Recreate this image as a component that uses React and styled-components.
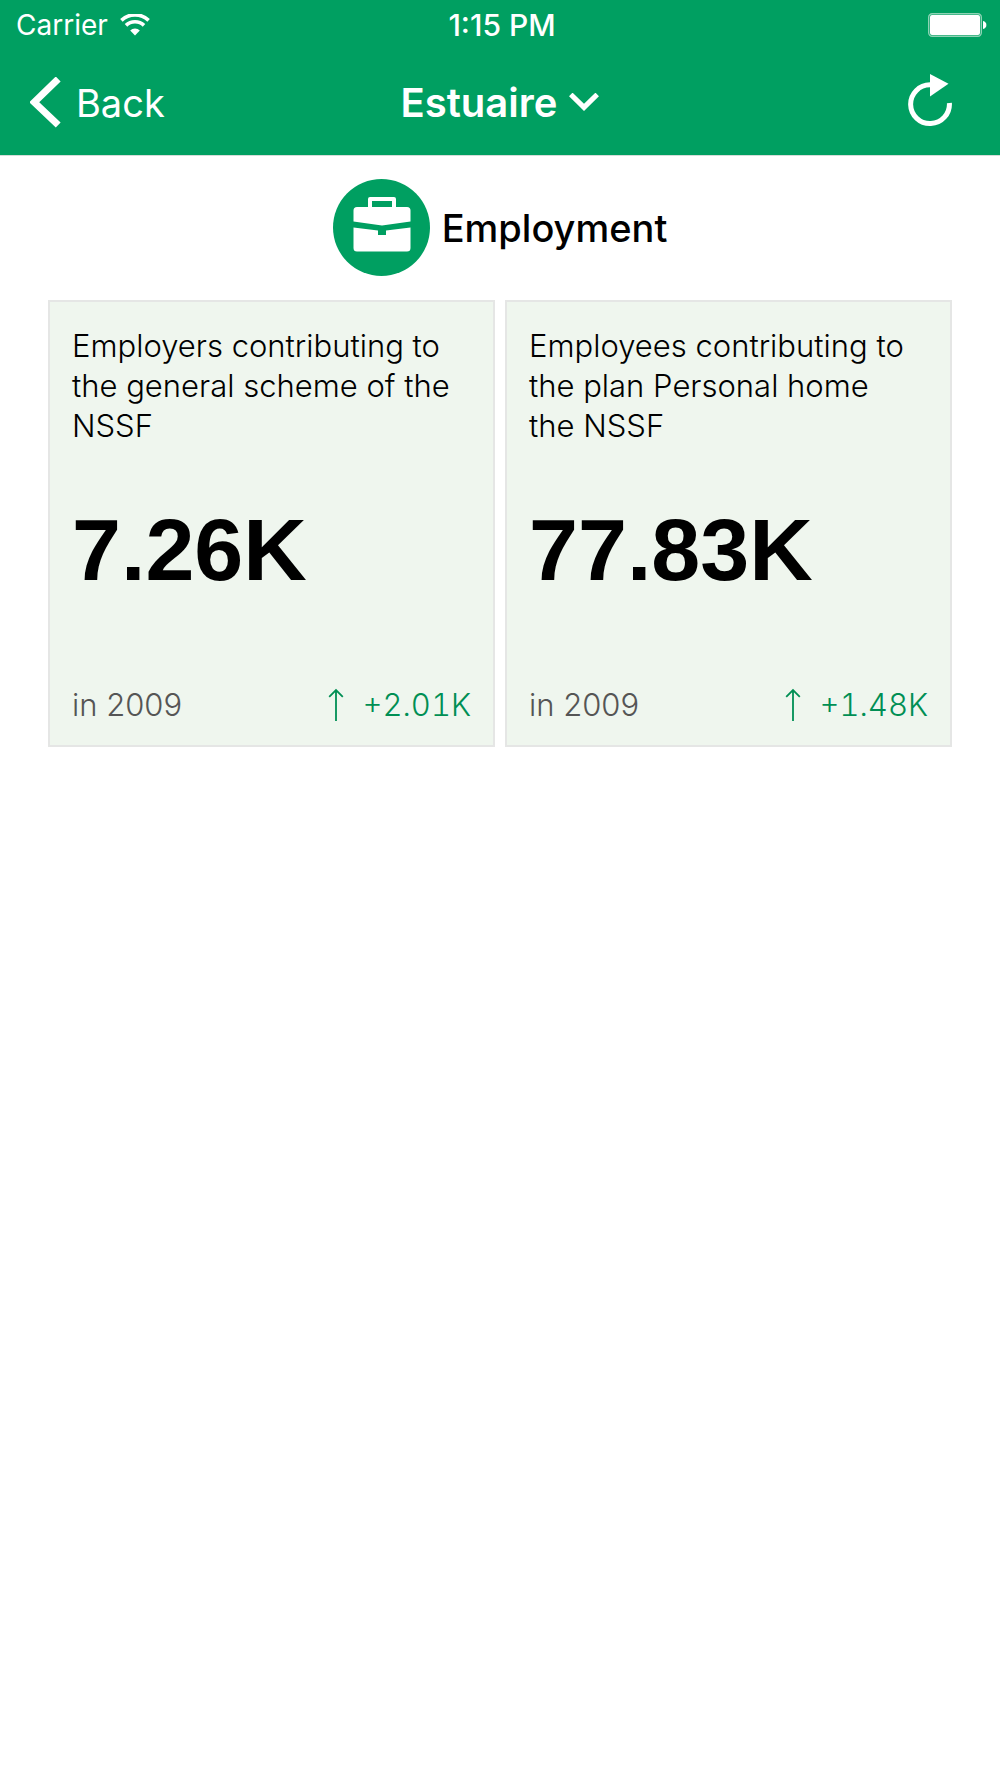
import React from "react";
import styled, { createGlobalStyle } from "styled-components";

const green = "#009f61";

const GlobalStyle = createGlobalStyle`
  * { box-sizing: border-box; }
  body {
    margin: 0;
    background: #fff;
    color: #000;
    font-family: Inter, "Liberation Sans", sans-serif;
  }
  svg { display: block; flex: none; }
`;

const Header = styled.header`
  background: ${green};
  color: #fff;
  border-bottom: 1px solid #d4ddd9;
`;

const StatusBar = styled.div`
  display: grid;
  grid-template-columns: 1fr auto 1fr;
  align-items: center;
  height: 50px;
  padding: 0 12px 0 16px;
  font-size: 28px;
  line-height: 32px;
`;

const Carrier = styled.div`
  display: flex;
  align-items: center;
  gap: 12px;
`;

const Time = styled.time`
  font-size: 30px;
  font-weight: 500;
`;

const End = styled.div`
  display: flex;
  justify-content: flex-end;
`;

const NavBar = styled.nav`
  display: grid;
  grid-template-columns: 1fr auto 1fr;
  align-items: center;
  height: 105px;
  padding: 0 30px;
`;

const NavButton = styled.button`
  display: flex;
  align-items: center;
  justify-self: start;
  gap: 14px;
  padding: 0;
  border: 0;
  background: none;
  color: inherit;
  font: 400 38px/48px Inter, "Liberation Sans", sans-serif;
  cursor: pointer;
`;

const TitleButton = styled(NavButton)`
  justify-self: center;
  gap: 12px;
  font-size: 40px;
  font-weight: 600;
`;

const IconButton = styled(NavButton)`
  justify-self: end;
  padding: 0 18px;
`;

const SectionTitle = styled.div`
  display: flex;
  align-items: center;
  justify-content: center;
  gap: 12px;
  padding: 23px 24px 24px;
`;

const Heading = styled.h1`
  margin: 0;
  font-size: 38px;
  line-height: 48px;
  font-weight: 500;
`;

const CardGrid = styled.section`
  display: grid;
  grid-template-columns: 1fr 1fr;
  gap: 10px;
  padding: 0 48px;
`;

const Card = styled.article`
  display: flex;
  flex-direction: column;
  aspect-ratio: 1;
  padding: 24px 22px 20px;
  border: 2px solid #e5e6e5;
  background: #eff6ee;
  font-size: 31px;
  line-height: 40px;
  font-weight: 300;
`;

const Label = styled.h2`
  margin: 0;
  padding-right: 12px;
  font: inherit;
`;

const Value = styled.p`
  margin: 56px 0 0;
  font: 700 88px/96px "Liberation Sans", Arial, sans-serif;
`;

const CardFooter = styled.footer`
  display: flex;
  justify-content: space-between;
  margin-top: auto;
`;

const Period = styled.span`
  color: #555;
`;

const Change = styled.span`
  display: flex;
  align-items: center;
  gap: 18px;
  color: #008f54;
  font-variant-numeric: tabular-nums;
`;

const WifiIcon = () => (
  <svg width="30" height="22" viewBox="0 0 30 22" aria-hidden="true">
    <g fill="none" stroke="#fff" strokeWidth="3.6">
      <path d="M1.4 6.4A19.4 19.4 0 0 1 28.6 6.4" />
      <path d="M6 11.4A12.8 12.8 0 0 1 24 11.4" />
    </g>
    <path d="M15 21.5L10.2 16.4A6.8 6.8 0 0 1 19.8 16.4Z" fill="#fff" />
  </svg>
);

const BatteryIcon = () => (
  <svg width="60" height="24" viewBox="0 0 60 24" role="img" aria-label="Battery full">
    <rect x="0.7" y="0.7" width="52.600" height="22.600" rx="3.5" fill="none" stroke="#8ed3b5" strokeWidth="1.4" />
    <rect x="2" y="2" width="50" height="20" rx="2" fill="#fff" />
    <path d="M55 8C59.500 8.500 59.500 15.500 55 16Z" fill="#fff" />
  </svg>
);

const BackIcon = () => (
  <svg width="32" height="52" viewBox="0 0 32 52" aria-hidden="true">
    <path d="M28.200 2L4.200 25.200L28.200 48" fill="none" stroke="#fff" strokeWidth="7" />
  </svg>
);

const DownIcon = () => (
  <svg width="30" height="20" viewBox="0 0 30 20" aria-hidden="true">
    <path d="M1.800 1.400L15 14.400L28.200 1.400" fill="none" stroke="#fff" strokeWidth="5" />
  </svg>
);

const RefreshIcon = () => (
  <svg width="44" height="58" viewBox="0 0 44 58" aria-hidden="true">
    <path d="M41.400 29A19.400 19.400 0 1 1 22 10.800" fill="none" stroke="#fff" strokeWidth="5" />
    <path d="M22 0L40.500 9.800L22 22.500Z" fill="#fff" />
  </svg>
);

const BriefcaseIcon = () => (
  <svg width="97" height="97" viewBox="0 0 97 97" aria-hidden="true">
    <circle cx="48.500" cy="48.500" r="48.500" fill={green} />
    <path
      fill="#fff"
      fillRule="evenodd"
      d="M35 28V20Q35 18 37 18H61Q63 18 63 20V28H74Q77.500 28 77.500 31.500V42.600L49 46.500L20.500 42.600V31.500Q20.500 28 24 28ZM39 28H59V22H39Z"
    />
    <path
      fill="#fff"
      d="M20.500 48.600L45 51.500V56H53V51.500L77.500 48.600V69Q77.500 72.500 74 72.500H24Q20.500 72.500 20.500 69Z"
    />
  </svg>
);

const UpIcon = () => (
  <svg width="16" height="34" viewBox="0 0 16 34" role="img" aria-label="Up">
    <path d="M8 33V2M1.200 8.800L8 2L14.800 8.800" fill="none" stroke="currentColor" strokeWidth="1.800" />
  </svg>
);

const indicators = [
  {
    label: "Employers contributing to the general scheme of the NSSF",
    value: "7.26K",
    period: "in 2009",
    change: "+2.01K",
  },
  {
    label: "Employees contributing to the plan Personal home the NSSF",
    value: "77.83K",
    period: "in 2009",
    change: "+1.48K",
  },
];

export default function App() {
  return (
    <>
      <GlobalStyle />
      <Header>
        <StatusBar>
          <Carrier>
            Carrier <WifiIcon />
          </Carrier>
          <Time>1:15 PM</Time>
          <End>
            <BatteryIcon />
          </End>
        </StatusBar>
        <NavBar>
          <NavButton type="button">
            <BackIcon />
            Back
          </NavButton>
          <TitleButton type="button">
            Estuaire
            <DownIcon />
          </TitleButton>
          <IconButton type="button" aria-label="Refresh">
            <RefreshIcon />
          </IconButton>
        </NavBar>
      </Header>
      <main>
        <SectionTitle>
          <BriefcaseIcon />
          <Heading>Employment</Heading>
        </SectionTitle>
        <CardGrid>
          {indicators.map((item) => (
            <Card key={item.label}>
              <Label>{item.label}</Label>
              <Value>{item.value}</Value>
              <CardFooter>
                <Period>{item.period}</Period>
                <Change>
                  <UpIcon />
                  {item.change}
                </Change>
              </CardFooter>
            </Card>
          ))}
        </CardGrid>
      </main>
    </>
  );
}
